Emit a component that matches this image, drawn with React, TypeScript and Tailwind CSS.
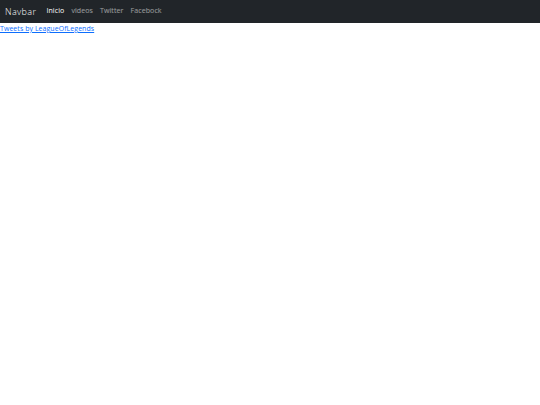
import React from "react";

export default function App() {
  return (
    <div className="min-h-[405px] bg-white" style={{ fontFamily: '"Open Sans", "DejaVu Sans", sans-serif' }}>
      <nav className="h-[23px] bg-[#212529] flex items-center px-[5px]">
        <span className="text-[9px] font-light text-white mr-[10px] tracking-[0.4px]">Navbar</span>
        <div className="flex items-center gap-[7px] text-[7px] tracking-[0.1px]">
          <span className="text-white">Inicio</span>
          <span className="text-white/55">videos</span>
          <span className="text-white/55">Twitter</span>
          <span className="text-white/55">Facebock</span>
        </div>
      </nav>
      <a href="#" className="block text-[7px] leading-[10px] mt-[1px] text-[#0d6efd] underline w-max tracking-[0.05px]">
        Tweets by LeagueOfLegends
      </a>
    </div>
  );
}
